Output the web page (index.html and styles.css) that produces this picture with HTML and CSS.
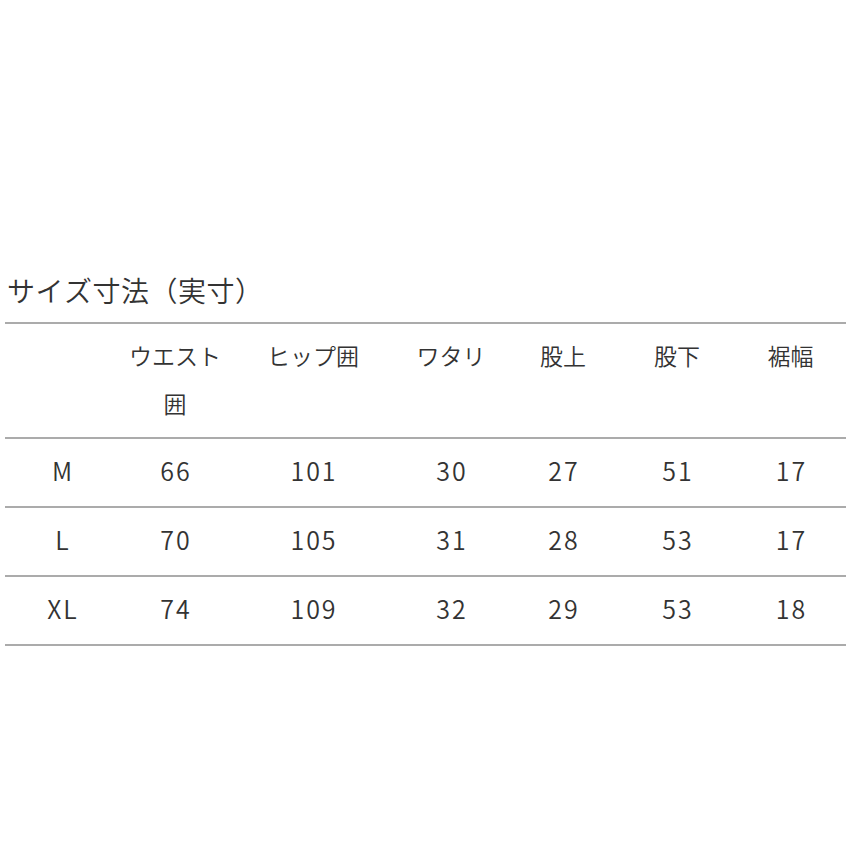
FILE: index.html
```html
<!DOCTYPE html>
<html lang="ja">
<head>
<meta charset="utf-8">
<link rel="stylesheet" href="styles.css">
</head>
<body>
<div class="page">
  <h2 class="title">サイズ寸法（実寸）</h2>
  <table class="size-table">
    <colgroup>
      <col class="c1"><col class="c2"><col class="c3"><col class="c4"><col class="c5"><col class="c6"><col class="c7">
    </colgroup>
    <thead>
      <tr>
        <th></th><th>ウエスト<br>囲</th><th>ヒップ囲</th><th>ワタリ</th><th>股上</th><th>股下</th><th>裾幅</th>
      </tr>
    </thead>
    <tbody>
      <tr><td>M</td><td>66</td><td>101</td><td>30</td><td>27</td><td>51</td><td>17</td></tr>
      <tr><td>L</td><td>70</td><td>105</td><td>31</td><td>28</td><td>53</td><td>17</td></tr>
      <tr><td>XL</td><td>74</td><td>109</td><td>32</td><td>29</td><td>53</td><td>18</td></tr>
    </tbody>
  </table>
</div>
</body>
</html>
```
FILE: styles.css
```css
html, body {
  margin: 0;
  padding: 0;
  background: #ffffff;
}
body {
  font-family: "Noto Sans CJK JP", "Noto Sans", sans-serif;
  color: #333333;
  font-kerning: none;
  font-feature-settings: "kern" 0;
}
.page {
  width: 841px;
  padding: 270px 0 0 5px;
}
.title {
  margin: 0 0 12px 2px;
  font-size: 28px;
  font-weight: 350;
  line-height: 40px;
  letter-spacing: 0.5px;
  color: #333333;
  font-kerning: none;
  font-feature-settings: "kern" 0, "halt" 0, "palt" 0;
}
.size-table {
  width: 841px;
  border-collapse: collapse;
  table-layout: fixed;
}
.c1 { width: 114px; }
.c2 { width: 112px; }
.c3 { width: 164px; }
.c4 { width: 112px; }
.c5 { width: 112px; }
.c6 { width: 116px; }
.c7 { width: 111px; }
.size-table thead tr {
  border-top: 2px solid #ababab;
}
.size-table tr {
  border-bottom: 2px solid #ababab;
}
.size-table th {
  font-weight: 350;
  font-size: 23px;
  line-height: 48px;
  padding: 7px 0 10px;
  vertical-align: top;
  text-align: center;
}
.size-table td {
  font-size: 25px;
  font-weight: 350;
  line-height: 48px;
  padding: 7px 0 12px;
  text-align: center;
  letter-spacing: 2px;
  text-indent: 2px;
}
```
